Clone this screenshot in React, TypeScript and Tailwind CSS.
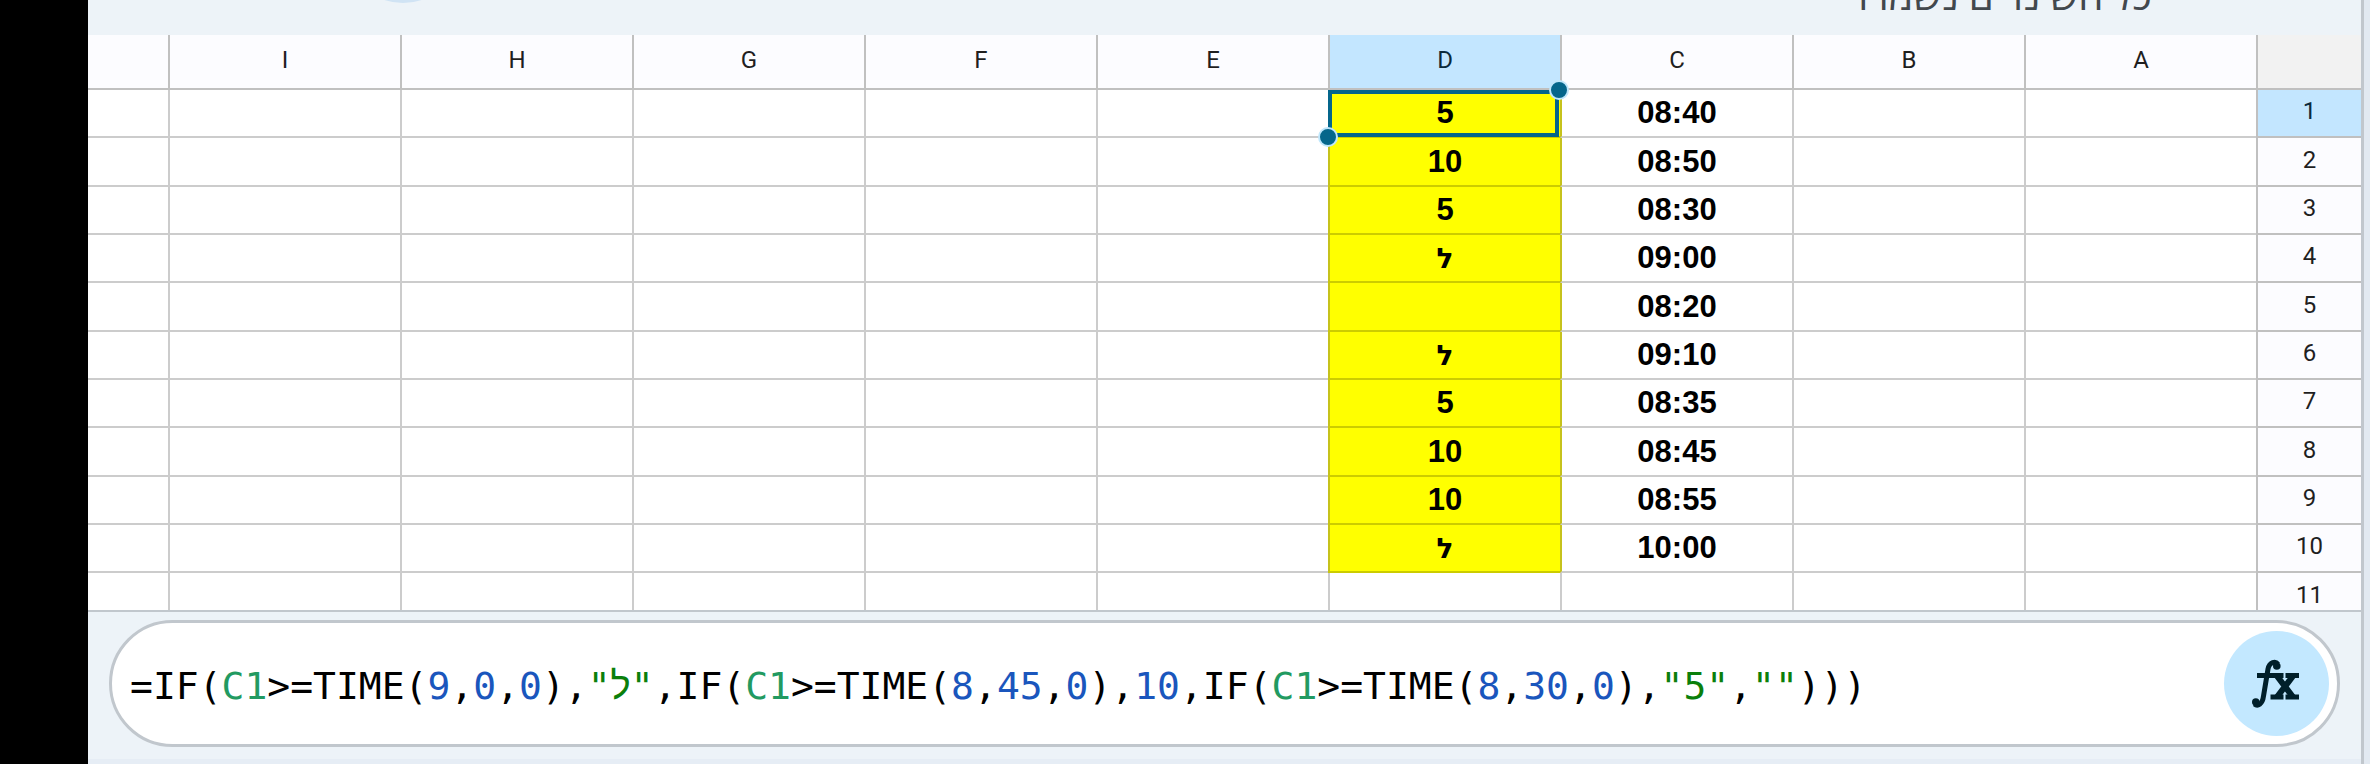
import { useState } from "react";

const columns = ["A", "B", "C", "D", "E", "F", "G", "H", "I"];

const rows = [
    { time: "08:40", delay: "5" },
    { time: "08:50", delay: "10" },
    { time: "08:30", delay: "5" },
    { time: "09:00", delay: "ל" },
    { time: "08:20", delay: "" },
    { time: "09:10", delay: "ל" },
    { time: "08:35", delay: "5" },
    { time: "08:45", delay: "10" },
    { time: "08:55", delay: "10" },
    { time: "10:00", delay: "ל" },
    { time: "", delay: "" },
];

const initialFormula = '=IF(C1>=TIME(9,0,0),"ל",IF(C1>=TIME(8,45,0),10,IF(C1>=TIME(8,30,0),"5","")))';

const tokenColor = (token: string) => {
    if (token.startsWith('"')) return "text-[#0b7f0b]";
    if (/^[A-Z]+\d+$/.test(token)) return "text-[#229a61]";
    if (/^\d+$/.test(token)) return "text-[#1a56bd]";
    return "text-black";
};

const Toolbar = () => (
    <header className="flex h-[35px] items-end justify-between overflow-hidden bg-[#edf3f8] pr-[209px] pl-[255px]">
        <div className="mb-8 size-[120px] shrink-0 rounded-full bg-[#d0e3f4]" />
        <p dir="rtl" className="mb-3.5 text-[40px] leading-[48px] font-medium whitespace-nowrap text-[#42484d]">
            כל השינויים נשמרו
        </p>
    </header>
);

const Selection = () => (
    <div className="pointer-events-none absolute top-0 right-px -bottom-px -left-0.5 z-10 border-4 border-[#05668b]">
        <span className="absolute -top-3.5 -right-3.5 size-5 rounded-full border-2 border-[#bfe6fb] bg-[#05668b]" />
        <span className="absolute -bottom-3.5 -left-3.5 size-5 rounded-full border-2 border-[#bfe6fb] bg-[#05668b]" />
    </div>
);

const Sheet = () => (
    <div dir="rtl" className="h-[575px] overflow-hidden">
        <table className="w-full table-fixed border-separate border-spacing-0 bg-white text-center">
            <thead>
                <tr className="h-[55px] text-2xl text-[#1f1f1f]">
                    <td className="w-[105px] border-b-2 border-l-2 border-[#c0c0c0] bg-[#f2f2f2]" />
                    {columns.map((name) => (
                        <th
                            key={name}
                            scope="col"
                            className={`w-[232px] border-b-2 border-l-2 border-[#c0c0c0] p-0 pb-1 font-normal ${
                                name === "D" ? "bg-[#c3e6ff] text-[#0b2a3c]" : "bg-[#fcfcff]"
                            }`}
                        >
                            {name}
                        </th>
                    ))}
                    <td className="border-b-2 border-[#c0c0c0] bg-[#fcfcff]" />
                </tr>
            </thead>
            <tbody>
                {rows.map((row, i) => (
                    <tr key={i} className="h-12 text-[31px] leading-8 font-bold text-black nth-[3n+2]:h-[49px]">
                        <th
                            scope="row"
                            className={`border-b-2 border-l-2 border-[#c0c0c0] p-0 pb-1 text-2xl font-normal ${
                                i === 0 ? "bg-[#c3e6ff] text-[#0b2a3c]" : "bg-[#fcfcff] text-[#1f1f1f]"
                            }`}
                        >
                            {i + 1}
                        </th>
                        {columns.map((name) => {
                            const filled = name === "D" && i < 10;
                            return (
                                <td
                                    key={name}
                                    className={`relative border-b-2 border-l-2 p-0 font-[Liberation_Sans,sans-serif] ${
                                        filled ? "border-b-[#cccc00] border-l-[#c6c21c] bg-[#ffff00]" : "border-[#cccccc]"
                                    } ${name === "C" && i < 10 ? "border-l-[#c6c21c]" : ""}`}
                                >
                                    {name === "C" && row.time}
                                    {name === "D" && (
                                        <span className={row.delay === "ל" ? "font-[DejaVu_Sans,sans-serif] text-[28px]" : ""}>
                                            {row.delay}
                                        </span>
                                    )}
                                    {name === "D" && i === 0 && <Selection />}
                                </td>
                            );
                        })}
                        <td className="border-b-2 border-[#cccccc]" />
                    </tr>
                ))}
            </tbody>
        </table>
    </div>
);

const FunctionIcon = () => (
    <svg viewBox="0 0 76 68" className="h-[68px] w-[76px]" fill="none" stroke="#001f2a" strokeWidth="5">
        <path d="M39 14C36.500 11 30.500 11.500 29 19L24.500 46C23.500 54.500 18.500 56.500 15.500 54" />
        <circle cx="37.800" cy="16" r="3.800" fill="#001f2a" stroke="none" />
        <circle cx="16.800" cy="52" r="3.800" fill="#001f2a" stroke="none" />
        <path d="M18 25.500H44.500M46.500 25.500H60M31.500 47H44.500M46.500 47H60" />
        <path d="M38 26L54 47M54 26L38 47" strokeWidth="6" />
    </svg>
);

const FormulaBar = () => {
    const [formula, setFormula] = useState(initialFormula);
    const tokens = formula.match(/"[^"]*"|[A-Z]+\d+|\d+|[A-Z]+|[^A-Z\d"]+|"/g) ?? [];

    return (
        <div className="border-t-2 border-[#c1c7cd] px-[21px] pt-2 pb-3">
            <div className="flex items-center rounded-full border-[3px] border-[#c1c7cd] bg-white p-2">
                <div className="grid flex-1 overflow-hidden pt-1 pl-2.5 font-[DejaVu_Sans_Mono,Liberation_Sans,monospace] text-[38px] leading-[48px]">
                    <div aria-hidden="true" className="col-start-1 row-start-1 whitespace-pre">
                        {tokens.map((token, i) => (
                            <span key={i} className={tokenColor(token)}>
                                {token}
                            </span>
                        ))}
                    </div>
                    <input
                        aria-label="Formula"
                        dir="ltr"
                        spellCheck={false}
                        value={formula}
                        onChange={(e) => setFormula(e.target.value)}
                        className="col-start-1 row-start-1 w-full bg-transparent text-transparent caret-black outline-none"
                    />
                </div>
                <button
                    aria-label="Insert function"
                    className="flex size-[105px] shrink-0 items-center justify-center rounded-full bg-[#c3e8ff]"
                >
                    <FunctionIcon />
                </button>
            </div>
        </div>
    );
};

export default function App() {
    return (
        <div className="flex min-h-screen bg-[#e2e9f1] font-[Roboto,Open_Sans,sans-serif]">
            <div className="w-[88px] shrink-0 bg-black" />
            <main className="mr-1.5 flex min-w-0 flex-1 flex-col border-r-[3px] border-[#c1c7cd] bg-[#edf3f8]">
                <Toolbar />
                <Sheet />
                <FormulaBar />
                <div className="flex-1 bg-[#e6edf5]" />
            </main>
        </div>
    );
}
